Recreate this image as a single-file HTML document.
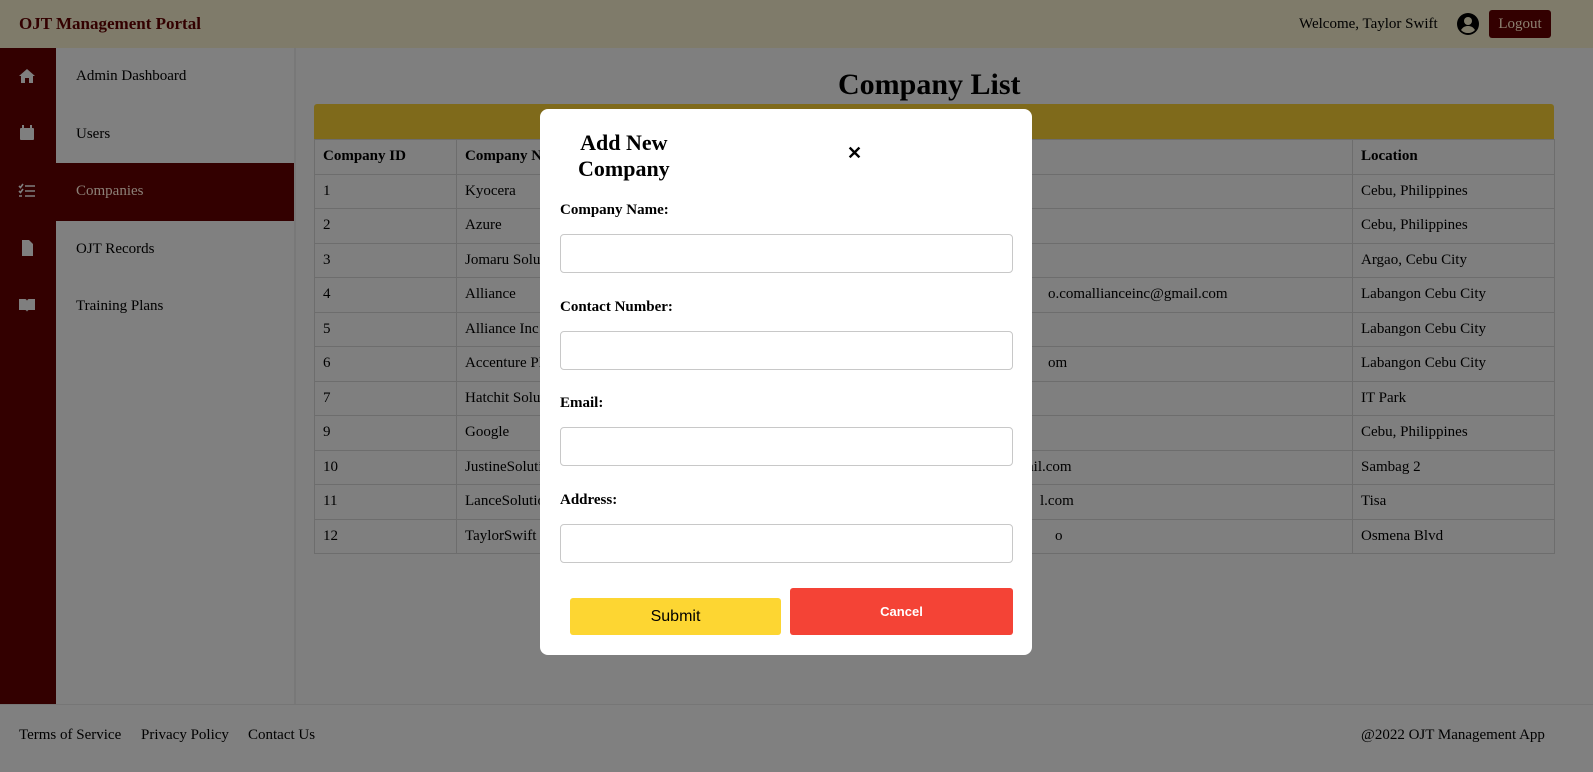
<!DOCTYPE html>
<html><head><style>
*{box-sizing:border-box;margin:0;padding:0}
body{width:1593px;height:772px;overflow:hidden;background:#7f7f7f;font-family:"Liberation Serif",serif;position:relative}
.hdr{position:absolute;left:0;top:0;width:1593px;height:48px;background:#7f7b6a}
.hdr .t{position:absolute;left:19px;top:14px;font-weight:bold;font-size:17px;color:#330000}
.hdr .w{position:absolute;left:1299px;top:16px;font-size:15px;color:#000}
.av{position:absolute;left:1456px;top:12px;width:24px;height:24px}
.lo{position:absolute;left:1489px;top:10px;width:62px;height:28px;background:#330000;border-radius:3px;color:#8c8070;font-size:15px;text-align:center;line-height:28px}
.ib{position:absolute;left:0;top:48px;width:56px;height:656px;background:#330000}
.sb{position:absolute;left:56px;top:48px;width:240px;height:656px;background:#808080;border-right:2px solid #787878}
.sb div{height:57.5px;line-height:57.5px;padding-left:20px;font-size:15px;color:#000}
.sb .a{background:#330000;color:#8c8077;width:238px}
.ic{position:absolute;left:18px;width:18px;height:18px}
h1{position:absolute;left:838px;top:68px;font-size:30px;font-weight:bold;color:#000}
.bar{position:absolute;left:314px;top:104px;width:1240px;height:35px;background:#7f6a1b;border-radius:3px 3px 0 0}
table{position:absolute;left:314px;top:139px;width:1240px;border-collapse:collapse;font-size:15px;color:#000;table-layout:fixed}
td,th{border:1px solid #6d6d6d;height:34.5px;padding:0 8px;text-align:left;white-space:nowrap;overflow:hidden}
td.e{padding-left:261px}
.ft{position:absolute;left:0;top:704px;width:1593px;height:68px;background:#808080;border-top:1px solid #767676;font-size:15px;color:#000}
.ft span{position:absolute;top:22px}
.m{position:absolute;left:540px;top:109px;width:492px;height:546px;background:#fff;border-radius:8px}
.m h2{position:absolute;left:38px;top:21px;font-size:22px;text-align:center;line-height:26px}
.x{position:absolute;left:307px;top:34px;font-size:18px;font-family:"Liberation Sans",sans-serif;font-weight:bold}
.m label{position:absolute;left:20px;font-weight:bold;font-size:15px}
.m .in{position:absolute;left:20px;width:453px;height:39px;border:1px solid #c8c8c8;border-radius:4px}
.sub{position:absolute;left:30px;top:489px;width:211px;height:37px;background:#fdd632;border-radius:3px;font-family:"Liberation Sans",sans-serif;font-size:16px;text-align:center;line-height:37px}
.can{position:absolute;left:250px;top:479px;width:223px;height:47px;background:#f44336;border-radius:3px;font-family:"Liberation Sans",sans-serif;font-size:13px;font-weight:bold;color:#fff;text-align:center;line-height:47px}
</style></head><body>
<div class="hdr"><span class="t">OJT Management Portal</span><span class="w">Welcome, Taylor Swift</span>
<svg class="av" viewBox="0 0 24 24"><circle cx="12" cy="12" r="11" fill="#000"/><circle cx="12" cy="9" r="4" fill="#7f7b6a"/><path d="M5 18c2-3 4-4 7-4s5 1 7 4c-2 2-4 3-7 3s-5-1-7-3z" fill="#7f7b6a"/></svg>
<span class="lo">Logout</span></div>
<div class="ib">
<svg class="ic" style="top:19px" viewBox="0 0 18 18"><path d="M9 2L1 9h2v7h4v-5h4v5h4V9h2z" fill="#7f7f7f"/></svg>
<svg class="ic" style="top:76px" viewBox="0 0 18 18"><rect x="2" y="4" width="14" height="12" rx="1" fill="#7f7f7f"/><rect x="4" y="1" width="2" height="4" fill="#7f7f7f"/><rect x="12" y="1" width="2" height="4" fill="#7f7f7f"/></svg>
<svg class="ic" style="top:134px" viewBox="0 0 18 18"><path d="M1 4l1.5 1.5L5 2M1 9l1.5 1.5L5 7M1 14h3M7 4h10M7 9h10M7 14h10" stroke="#7f7f7f" stroke-width="1.6" fill="none"/></svg>
<svg class="ic" style="top:191px" viewBox="0 0 18 18"><path d="M4 1h7l4 4v12H4z" fill="#7f7f7f"/></svg>
<svg class="ic" style="top:248px" viewBox="0 0 18 18"><path d="M1 3h6c1 0 2 1 2 2v11c0-1-1-2-2-2H1zM17 3h-6c-1 0-2 1-2 2v11c0-1 1-2 2-2h6z" fill="#7f7f7f"/></svg>
</div>
<div class="sb"><div>Admin Dashboard</div><div>Users</div><div class="a">Companies</div><div>OJT Records</div><div>Training Plans</div></div>
<h1>Company List</h1>
<div class="bar"></div>
<table>
<colgroup><col style="width:142px"><col style="width:330px"><col style="width:566px"><col style="width:202px"></colgroup>
<tr><th>Company ID</th><th>Company Name</th><th></th><th>Location</th></tr>
<tr><td>1</td><td>Kyocera</td><td></td><td>Cebu, Philippines</td></tr>
<tr><td>2</td><td>Azure</td><td></td><td>Cebu, Philippines</td></tr>
<tr><td>3</td><td>Jomaru Solutions</td><td></td><td>Argao, Cebu City</td></tr>
<tr><td>4</td><td>Alliance</td><td class="e">o.comallianceinc@gmail.com</td><td>Labangon Cebu City</td></tr>
<tr><td>5</td><td>Alliance Inc</td><td></td><td>Labangon Cebu City</td></tr>
<tr><td>6</td><td>Accenture PH</td><td class="e">om</td><td>Labangon Cebu City</td></tr>
<tr><td>7</td><td>Hatchit Solutions</td><td></td><td>IT Park</td></tr>
<tr><td>9</td><td>Google</td><td></td><td>Cebu, Philippines</td></tr>
<tr><td>10</td><td>JustineSolutions</td><td class="e" style="padding-left:240px">ail.com</td><td>Sambag 2</td></tr>
<tr><td>11</td><td>LanceSolutions</td><td class="e" style="padding-left:253px">l.com</td><td>Tisa</td></tr>
<tr><td>12</td><td>TaylorSwift</td><td class="e" style="padding-left:268px">o</td><td>Osmena Blvd</td></tr>
</table>
<div class="ft"><span style="left:19px">Terms of Service</span><span style="left:141px">Privacy Policy</span><span style="left:248px">Contact Us</span><span style="left:1361px">@2022 OJT Management App</span></div>
<div class="m"><h2>Add New<br>Company</h2><span class="x">✕</span>
<label style="top:93px">Company Name:</label><div class="in" style="top:125px"></div>
<label style="top:190px">Contact Number:</label><div class="in" style="top:222px"></div>
<label style="top:286px">Email:</label><div class="in" style="top:318px"></div>
<label style="top:383px">Address:</label><div class="in" style="top:415px"></div>
<div class="sub">Submit</div><div class="can">Cancel</div></div>
</body></html>
